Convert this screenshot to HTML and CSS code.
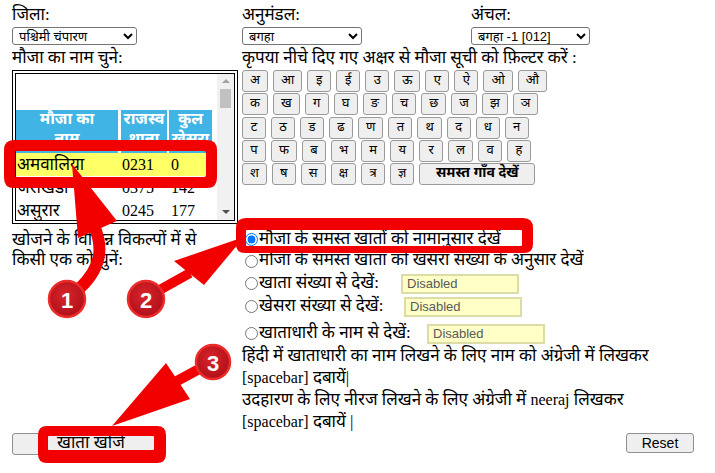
FILE: index.html
```html
<!DOCTYPE html>
<html lang="hi">
<head>
<meta charset="utf-8">
<title>खाता खोजें</title>
<link rel="stylesheet" href="styles.css">
</head>
<body>
<div class="page">
  <div class="top">
    <div class="field">
      <label class="flabel">जिला:</label>
      <select class="sel sel-dist"><option>पश्चिमी चंपारण</option></select>
    </div>
    <div class="field">
      <label class="flabel">अनुमंडल:</label>
      <select class="sel sel-sub"><option>बगहा</option></select>
    </div>
    <div class="field">
      <label class="flabel">अंचल:</label>
      <select class="sel sel-circ"><option>बगहा -1 [012]</option></select>
    </div>
  </div>

  <div class="main">
    <div class="left">
      <div class="lbl">मौजा का नाम चुने:</div>
      <div class="listbox">
        <div class="listbox-inner">
          <div class="list-content">
            <table class="mauza">
              <thead>
                <tr><th class="c1">मौजा का<br>नाम</th><th class="c2">राजस्व<br>थाना</th><th class="c3">कुल<br>खेसरा</th></tr>
              </thead>
              <tbody>
                <tr class="hl"><td class="c1">अमवालिया</td><td class="c2">0231</td><td class="c3">0</td></tr>
                <tr><td class="c1">जरीखडौ</td><td class="c2">0375</td><td class="c3">142</td></tr>
                <tr><td class="c1">असुरार</td><td class="c2">0245</td><td class="c3">177</td></tr>
              </tbody>
            </table>
          </div>
          <div class="scrollbar">
            <span class="sb-up"></span>
            <span class="sb-thumb"></span>
            <span class="sb-track"></span>
            <span class="sb-down"></span>
          </div>
        </div>
      </div>
      <div class="choose">खोजने के विभिन्न विकल्पों में से<br>किसी एक को चुनें:</div>
    </div>

    <div class="right">
      <div class="lbl">कृपया नीचे दिए गए अक्षर से मौजा सूची को फ़िल्टर करें :</div>
      <div class="letters">
        <div class="lrow">
          <button class="lb">अ</button><button class="lb">आ</button><button class="lb">इ</button><button class="lb">ई</button><button class="lb">उ</button><button class="lb">ऊ</button><button class="lb">ए</button><button class="lb">ऐ</button><button class="lb">ओ</button><button class="lb">औ</button>
        </div>
        <div class="lrow">
          <button class="lb">क</button><button class="lb">ख</button><button class="lb">ग</button><button class="lb">घ</button><button class="lb">ङ</button><button class="lb">च</button><button class="lb">छ</button><button class="lb">ज</button><button class="lb">झ</button><button class="lb">ञ</button>
        </div>
        <div class="lrow">
          <button class="lb">ट</button><button class="lb">ठ</button><button class="lb">ड</button><button class="lb">ढ</button><button class="lb">ण</button><button class="lb">त</button><button class="lb">थ</button><button class="lb">द</button><button class="lb">ध</button><button class="lb">न</button>
        </div>
        <div class="lrow">
          <button class="lb">प</button><button class="lb">फ</button><button class="lb">ब</button><button class="lb">भ</button><button class="lb">म</button><button class="lb">य</button><button class="lb">र</button><button class="lb">ल</button><button class="lb">व</button><button class="lb">ह</button>
        </div>
        <div class="lrow">
          <button class="lb">श</button><button class="lb">ष</button><button class="lb">स</button><button class="lb">क्ष</button><button class="lb">त्र</button><button class="lb">ज्ञ</button><button class="lb all">समस्त गाँव देखें</button>
        </div>
      </div>

      <div class="options">
        <label class="opt o1"><input type="radio" name="opt" checked><span>मौजा के समस्त खातों को नामानुसार देखें</span></label>
        <label class="opt o2"><input type="radio" name="opt"><span>मौजा के समस्त खाता को खसरा संख्या के अनुसार देखें</span></label>
        <label class="opt o3"><input type="radio" name="opt"><span class="olbl w3">खाता संख्या से देखें:</span><input class="dis" type="text" value="Disabled" disabled></label>
        <label class="opt o4"><input type="radio" name="opt"><span class="olbl w4">खेसरा संख्या से देखें:</span><input class="dis" type="text" value="Disabled" disabled></label>
        <label class="opt o5"><input type="radio" name="opt"><span class="olbl w5">खाताधारी के नाम से देखें:</span><input class="dis" type="text" value="Disabled" disabled></label>
      </div>

      <div class="hint">हिंदी में खाताधारी का नाम लिखने के लिए नाम को अंग्रेजी में लिखकर<br><span class="lat">[spacebar]</span> दबायें|<br>उदहारण के लिए नीरज लिखने के लिए अंग्रेजी में <span class="lat">neeraj</span> लिखकर<br><span class="lat">[spacebar]</span> दबायें |</div>
    </div>
  </div>

  <div class="actions">
    <button class="btn search">खाता खोजें</button>
    <button class="btn reset">Reset</button>
  </div>

  <svg class="annot" width="715" height="473" viewBox="0 0 715 473" aria-hidden="true">
    <defs>
      <radialGradient id="cg" cx="45%" cy="40%" r="60%">
        <stop offset="0" stop-color="#d9242b"/>
        <stop offset="1" stop-color="#b01019"/>
      </radialGradient>
    </defs>
    <path fill="#f20000" fill-rule="evenodd" d="M14 140 H207 Q217 140 217 150 V178 Q217 188 207 188 H14 Q4 188 4 178 V150 Q4 140 14 140 Z M17 151 H204 Q206 151 206 153 V175 Q206 177 204 177 H17 Q15 177 15 175 V153 Q15 151 17 151 Z"/>
    <path fill="#f20000" fill-rule="evenodd" d="M246 218 H523 Q533 218 533 228 V244 Q533 253 524 253 H245 Q236 253 236 244 V228 Q236 218 246 218 Z M247 230 H521 Q522 230 522 231 V245 Q522 246 521 246 H247 Q246 246 246 245 V231 Q246 230 247 230 Z"/>
    <path fill="#f20000" fill-rule="evenodd" d="M47 426 H157 Q166 426 166 435 V454 Q166 463 157 463 H47 Q38 463 38 454 V435 Q38 426 47 426 Z M49 436 H153 Q154 436 154 437 V449 Q154 450 153 450 H49 Q48 450 48 449 V437 Q48 436 49 436 Z"/>

    <path d="M94 226 C104 248 101 268 80 288" fill="none" stroke="#f20000" stroke-width="12"/>
    <polygon points="72,164 117,221 78,238" fill="#f20000"/>
    <path d="M156 292 L190 273" fill="none" stroke="#f20000" stroke-width="10"/>
    <polygon points="244,237 174,261 204,285" fill="#f20000"/>
    <path d="M201 368 L177 381" fill="none" stroke="#f20000" stroke-width="10"/>
    <polygon points="112,426 166,363 190,399" fill="#f20000"/>

    <circle cx="67" cy="299" r="18" fill="url(#cg)" stroke="#ee2b2b" stroke-width="2.5"/>
    <text x="67" y="300" class="num">1</text>
    <circle cx="146" cy="299" r="18" fill="url(#cg)" stroke="#ee2b2b" stroke-width="2.5"/>
    <text x="146" y="300" class="num">2</text>
    <circle cx="213" cy="362" r="17" fill="url(#cg)" stroke="#ee2b2b" stroke-width="2.5"/>
    <text x="213" y="363" class="num">3</text>
  </svg>
</div>
</body>
</html>
```

FILE: styles.css
```css
* { box-sizing: border-box; }
html, body { margin: 0; padding: 0; }
body {
  font-family: "Liberation Serif", "Noto Sans Devanagari", "Noto Sans", serif;
  font-size: 17px;
  color: #000;
  background: #fff;
  width: 715px;
  height: 473px;
  overflow: hidden;
}
.lat { font-size: 16px; }
.page {
  position: relative;
  width: 715px;
  height: 473px;
  padding: 5px 21px 0 12px;
}

/* top selects */
.top {
  display: grid;
  grid-template-columns: 230px 229px 1fr;
}
.flabel {
  display: block;
  height: 20px;
  line-height: 20px;
}
.sel {
  display: block;
  margin-top: 2px;
  height: 18px;
  padding: 0 2px;
  font-family: "Liberation Sans", "Noto Sans Devanagari", sans-serif;
  font-size: 13px;
  border: 1px solid #767676;
  border-radius: 3px;
  background: #fff;
  color: #000;
}
.sel-dist { width: 125px; }
.sel-sub { width: 120px; }
.sel-circ { width: 119px; }

/* main */
.main {
  display: grid;
  grid-template-columns: 230px 1fr;
  margin-top: 3px;
}
.lbl {
  height: 20px;
  line-height: 20px;
  white-space: nowrap;
}

/* listbox */
.listbox {
  margin-top: 2px;
  width: 226px;
  height: 154px;
  border: 1px solid #000;
  padding: 2px;
}
.listbox-inner {
  border: 1px solid #000;
  height: 100%;
  display: flex;
}
.list-content {
  flex: 1;
  overflow: hidden;
}
.mauza {
  margin-top: 36px;
  border-collapse: separate;
  border-spacing: 0;
  table-layout: fixed;
  width: 196px;
}
.mauza th {
  height: 43px;
  padding: 1px 0 0;
  vertical-align: top;
  background: #3fb4e5;
  color: #fff;
  font-family: "Noto Sans Devanagari", "Liberation Sans", sans-serif;
  font-weight: bold;
  font-size: 16px;
  line-height: 20px;
  text-align: center;
  white-space: nowrap;
  overflow: hidden;
}
.mauza .c1 { width: 105px; border-right: 3px solid #fff; }
.mauza .c2 { width: 48px; border-right: 2px solid #fff; }
.mauza .c3 { width: 43px; }
.mauza td {
  height: 23px;
  line-height: 23px;
  padding: 0 0 0 1px;
  white-space: nowrap;
  overflow: hidden;
}
.mauza td.c2, .mauza td.c3 { font-size: 16px; }
.mauza td.c1, .mauza td.c2 { border-right-color: transparent; }
.mauza td.c3 { padding-left: 2px; }
.mauza tr.hl td { background: #ffff66; }

.scrollbar {
  width: 17px;
  background: #f1f1f1;
  display: flex;
  flex-direction: column;
  align-items: center;
}
.sb-up, .sb-down {
  width: 0;
  height: 0;
  border-left: 4px solid transparent;
  border-right: 4px solid transparent;
}
.sb-up {
  margin-top: 5px;
  border-bottom: 4px solid #a3a3a3;
}
.sb-thumb {
  margin-top: 6px;
  width: 11px;
  height: 19px;
  background: #c1c1c1;
}
.sb-track { flex: 1; }
.sb-down {
  margin-bottom: 6px;
  border-top: 4px solid #505050;
}

.choose {
  margin-top: 6px;
  line-height: 20px;
}

/* letter buttons */
.letters {
  margin-top: 2px;
  display: flex;
  flex-direction: column;
  gap: 1.25px;
}
.lrow {
  display: flex;
  gap: 5px;
}
.lb {
  height: 22px;
  min-width: 24px;
  padding: 0 7px;
  font-family: "Noto Sans Devanagari", "Liberation Sans", sans-serif;
  font-size: 13px;
  line-height: 20px;
  background: #efefef;
  border: 1px solid #9a9a9a;
  border-radius: 3px;
  color: #000;
}
.lb.all {
  margin-left: 0;
  width: 116px;
  padding: 0 4px;
  font-weight: bold;
  font-size: 14px;
}

/* radio options */
.options {
  margin-top: 44px;
}
.opt {
  display: flex;
  align-items: center;
  white-space: nowrap;
}
.opt input[type="radio"] {
  width: 13px;
  height: 13px;
  margin: 0 1px 0 3px;
}
.o1 { height: 21px; }
.o2 { height: 22px; }
.o3 { height: 23px; }
.o4 { height: 23px; }
.o5 { height: 23px; margin-top: 4px; }
.olbl { display: inline-block; }
.w3 { width: 142px; }
.w4 { width: 145px; }
.w5 { width: 168px; }
.dis {
  width: 118px;
  height: 20px;
  padding: 0 0 0 4px;
  font-family: "Liberation Sans", sans-serif;
  font-size: 13px;
  color: #5a5a5a;
  background: #ffffc6;
  border: 2px solid #dcdca6;
  border-radius: 0;
}

.hint {
  line-height: 22px;
  white-space: nowrap;
}

/* bottom buttons */
.actions {
  display: flex;
  justify-content: space-between;
  align-items: flex-start;
}
.btn {
  height: 22px;
  font-family: "Liberation Sans", "Noto Sans Devanagari", sans-serif;
  font-size: 13px;
  background: #efefef;
  border: 1px solid #8f8f8f;
  border-radius: 3px;
  color: #000;
}
.btn.search {
  width: 148px;
  text-align: left;
  padding: 0 0 0 44px;
  font-family: "Noto Sans Devanagari", "Liberation Sans", sans-serif;
  font-size: 17px;
  line-height: 20px;
}
.btn.reset {
  width: 68px;
  height: 20px;
  font-size: 14px;
}

/* annotations */
.annot {
  position: absolute;
  top: 0;
  left: 0;
  pointer-events: none;
}
.num {
  fill: #fff;
  font-family: "Liberation Sans", sans-serif;
  font-weight: bold;
  font-size: 22px;
  text-anchor: middle;
  dominant-baseline: central;
}
```
